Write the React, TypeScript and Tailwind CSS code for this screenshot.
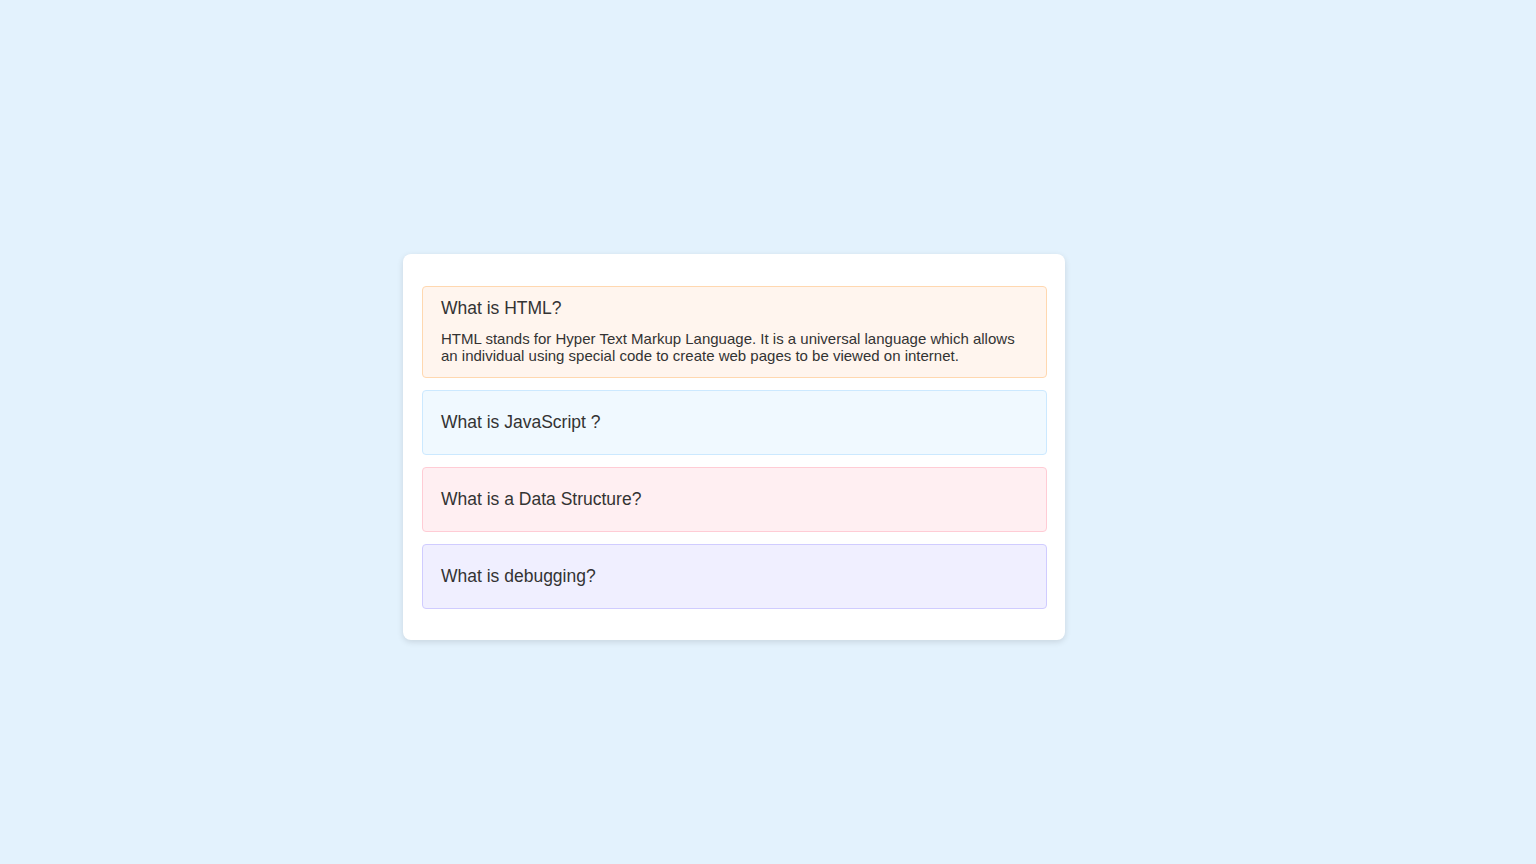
import React from "react";

export default function App() {
  const items = [
    { q: "What is JavaScript ?", cls: "bg-[#f0f9ff] border-[#cce9ff]" },
    { q: "What is a Data Structure?", cls: "bg-[#ffeff2] border-[#ffccd5]" },
    { q: "What is debugging?", cls: "bg-[#f0efff] border-[#d0ccff]" },
  ];
  return (
    <div
      className="min-h-screen w-full bg-[#e3f2fd] flex items-center justify-center pr-[68px] pt-[30px] text-[#333333]"
      style={{ fontFamily: '"Liberation Sans", Arial, sans-serif' }}
    >
      <div className="w-[662px] bg-white rounded-[8px] shadow-[0_2px_6px_rgba(0,0,0,0.12)] pl-[19px] pr-[18px] pt-[32px] pb-[31px] flex flex-col gap-[12px]">
        <div className="border border-[#ffd8b0] bg-[#fff5ee] rounded-[4px] px-[18px] pt-[10px] pb-[13px]">
          <div className="text-[17.5px] leading-[23px]">What is HTML?</div>
          <p className="mt-[10px] text-[15px] leading-[17px]">
            HTML stands for Hyper Text Markup Language. It is a universal language which allows an individual using special code to create web pages to be viewed on internet.
          </p>
        </div>
        {items.map((it) => (
          <div key={it.q} className={`border rounded-[4px] px-[18px] py-[20px] ${it.cls}`}>
            <div className="text-[17.5px] leading-[23px]">{it.q}</div>
          </div>
        ))}
      </div>
    </div>
  );
}
